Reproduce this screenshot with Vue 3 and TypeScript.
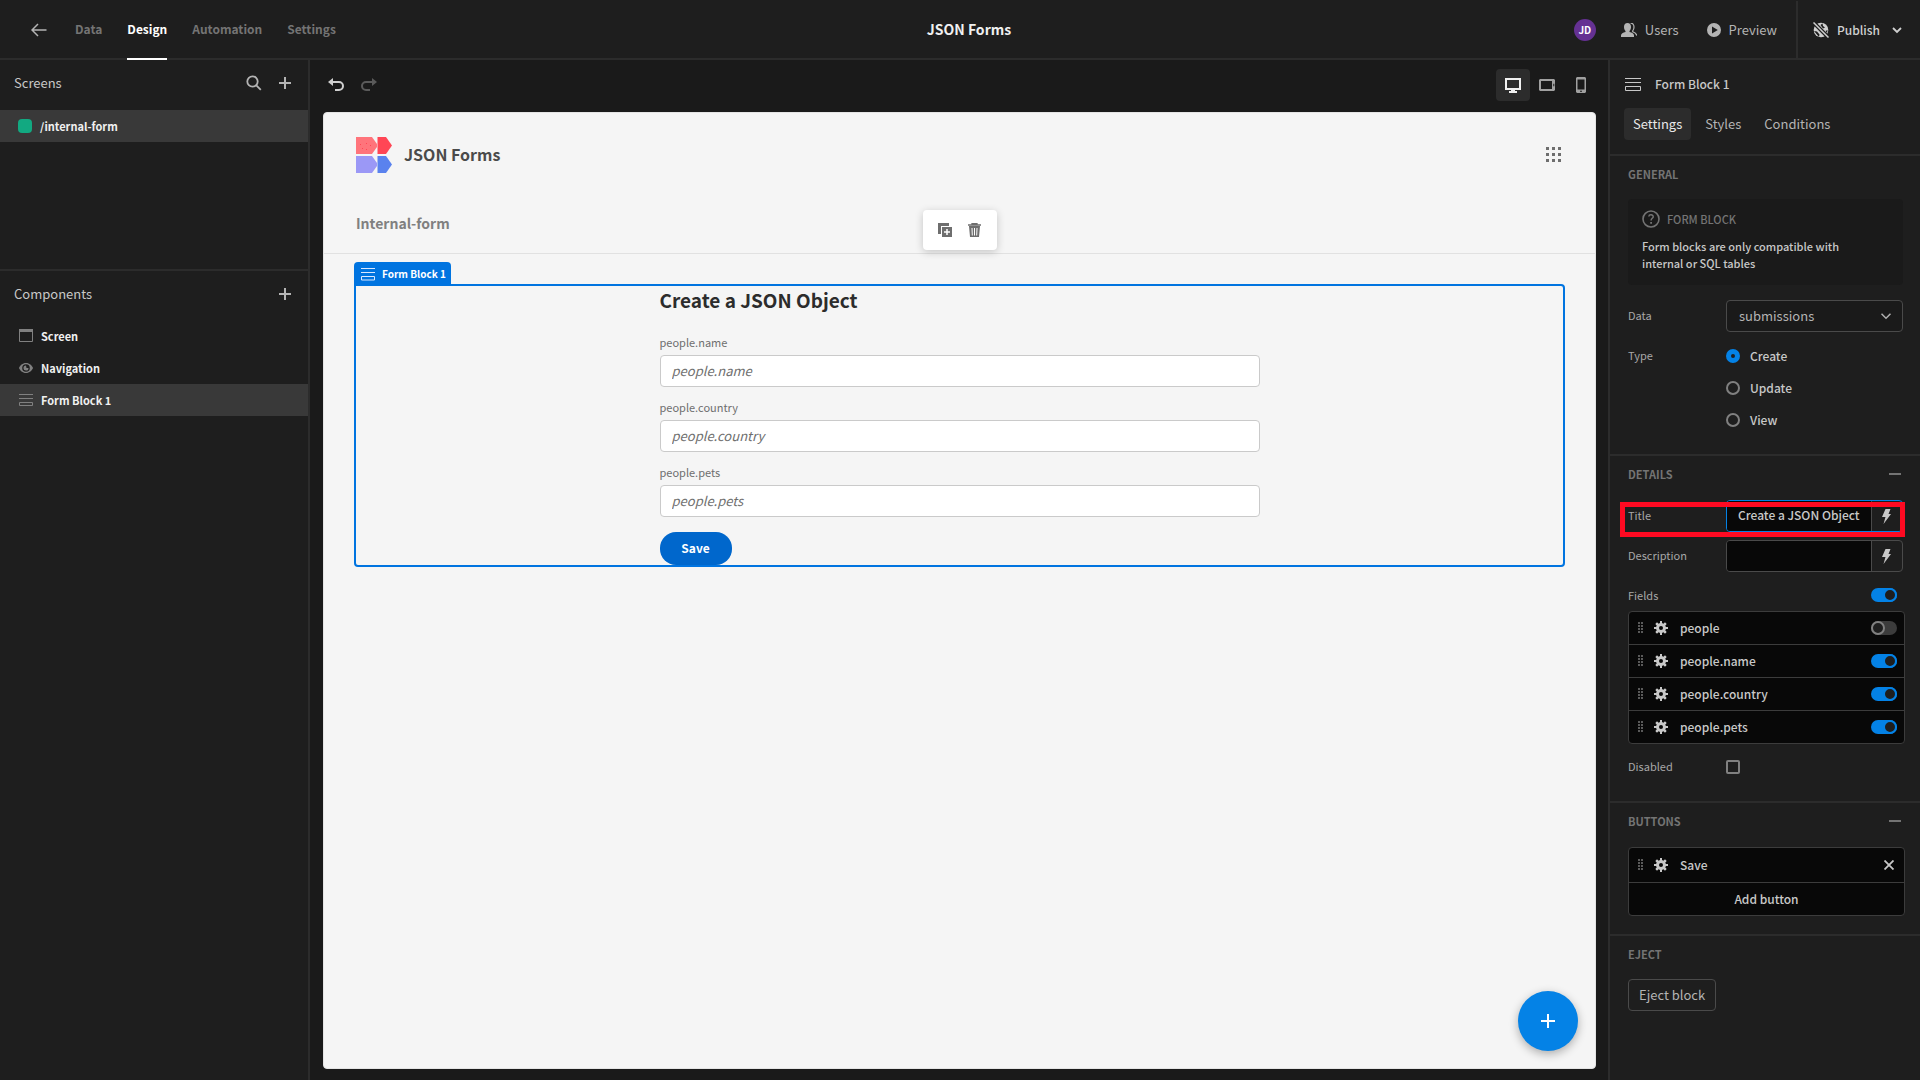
<script setup lang="ts">
import { ref } from 'vue'

interface FieldItem {
  name: string
  on: boolean
}

const navTabs = ['Data', 'Design', 'Automation', 'Settings']
const activeTab = ref('Design')

const panelTabs = ['Settings', 'Styles', 'Conditions']
const activePanelTab = ref('Settings')

const formTypes = ['Create', 'Update', 'View']
const formType = ref('Create')

const components = ['Screen', 'Navigation', 'Form Block 1']
const selectedComponent = ref('Form Block 1')

const devices = ['Desktop', 'Tablet', 'Mobile']
const device = ref('Desktop')

const title = ref('Create a JSON Object')
const description = ref('')
const allFields = ref(true)
const disabled = ref(false)
const fields = ref<FieldItem[]>([
  { name: 'people', on: false },
  { name: 'people.name', on: true },
  { name: 'people.country', on: true },
  { name: 'people.pets', on: true },
])
const formFields = ['people.name', 'people.country', 'people.pets']

const gearPath =
  'M6 0h2v2.1l1.4.6L11 1.3 12.7 3l-1.4 1.6.6 1.4H14v2h-2.1l-.6 1.4 1.4 1.6-1.7 1.7-1.6-1.4-1.4.6V14H6v-2.1l-1.4-.6L3 12.7 1.3 11l1.4-1.6L2.1 8H0V6h2.1l.6-1.4L1.3 3 3 1.300l1.6 1.4L6 2.1zM7 5a2 2 0 1 0 0 4 2 2 0 0 0 0-4z'
const boltPath = 'M4.500 0H9.500L7.500 5H10L2.500 15 4.500 8H1z'
</script>

<template>
  <div class="app">
    <header class="top">
      <nav class="top-nav">
        <button class="icon-btn back" aria-label="Back">
          <svg width="16" height="14" viewBox="0 0 16 14" fill="none" stroke="currentColor" stroke-width="1.500">
            <path d="M15.500 7H1M7 1 1 7l6 6" />
          </svg>
        </button>
        <a
          v-for="tab in navTabs"
          :key="tab"
          href="#"
          class="nav-link"
          :class="{ active: tab === activeTab }"
          @click.prevent="activeTab = tab"
          >{{ tab }}</a
        >
      </nav>
      <h1 class="app-name">JSON Forms</h1>
      <div class="top-actions">
        <span class="avatar">JD</span>
        <button class="top-btn users">
          <svg width="16" height="14" viewBox="0 0 16 14" fill="currentColor">
            <path d="M6.500 0C8.700 0 10 1.600 10 4c0 1.800-.6 3.100-1.500 4v.9c2.600.5 4.500 1.500 4.500 3.500V14H0v-1.600c0-2 2-3 4.500-3.500V8C3.600 7.100 3 5.800 3 4c0-2.400 1.300-4 3.500-4z" />
            <path d="M9.500.2C11.500 0 13 1.500 13 4c0 1.800-.5 3-1.300 3.800v1c2 .6 3.500 1.500 4.100 3.700" fill="none" stroke="currentColor" stroke-width="1.200" />
          </svg>
          Users
        </button>
        <button class="top-btn preview">
          <svg width="14" height="14" viewBox="0 0 14 14" fill="currentColor">
            <path fill-rule="evenodd" d="M7 0a7 7 0 1 1 0 14A7 7 0 0 1 7 0zM5 3.500v7L10.800 7z" />
          </svg>
          Preview
        </button>
        <button class="top-btn publish">
          <svg width="16" height="16" viewBox="0 0 16 16">
            <circle cx="8" cy="8" r="7.300" fill="currentColor" />
            <path d="M7.500 3l2-1.500.5 2.500 2 1.500-2 1zM1 9l3 .500 2.500 3L6 15zM12.500 9l2-1-.5 3z" fill="#1e1e1e" />
            <path d="M0 0 16 16" stroke="#1e1e1e" stroke-width="4" />
            <path d="M.5.500 15.500 15.500" stroke="currentColor" stroke-width="1.500" />
          </svg>
          Publish
          <svg class="chev" width="10" height="7" viewBox="0 0 10 7" fill="none" stroke="currentColor" stroke-width="1.800">
            <path d="M1 1l4 4 4-4" />
          </svg>
        </button>
      </div>
    </header>

    <div class="body">
      <aside class="left">
        <section class="screens">
          <div class="left-head">
            <h2>Screens</h2>
            <button class="icon-btn" aria-label="Search screens">
              <svg width="16" height="16" viewBox="0 0 16 16" fill="none" stroke="currentColor" stroke-width="1.800">
                <circle cx="6.500" cy="6.500" r="5.200" />
                <path d="M10.300 10.300l4.500 4.500" />
              </svg>
            </button>
            <button class="icon-btn" aria-label="Add screen">
              <svg width="12" height="12" viewBox="0 0 12 12" stroke="currentColor" stroke-width="2">
                <path d="M6 0v12M0 6h12" />
              </svg>
            </button>
          </div>
          <a href="#" class="tree-row screen-row selected" @click.prevent>
            <span class="dot"></span>/internal-form
          </a>
        </section>
        <section class="components">
          <div class="left-head">
            <h2>Components</h2>
            <button class="icon-btn" aria-label="Add component">
              <svg width="12" height="12" viewBox="0 0 12 12" stroke="currentColor" stroke-width="2">
                <path d="M6 0v12M0 6h12" />
              </svg>
            </button>
          </div>
          <a
            v-for="(c, i) in components"
            :key="c"
            href="#"
            class="tree-row"
            :class="{ selected: c === selectedComponent }"
            @click.prevent="selectedComponent = c"
          >
            <svg v-if="i === 0" width="14" height="14" viewBox="0 0 14 14">
              <path d="M.5.500h13v12H.5z" fill="none" stroke="#808080" />
              <path d="M0 0h14v3H0z" fill="#808080" />
            </svg>
            <svg v-else-if="i === 1" width="14" height="14" viewBox="0 0 14 14">
              <path fill="#808080" fill-rule="evenodd" d="M7 2c3.500 0 6 2.500 7 5-1 2.500-3.500 5-7 5s-6-2.500-7-5c1-2.500 3.500-5 7-5zm0 1.200a3.800 3.800 0 1 0 0 7.600 3.800 3.800 0 0 0 0-7.600z" />
              <path fill="#808080" d="M7 4.600A2.500 2.500 0 1 0 9.500 7L7.500 7z" />
            </svg>
            <svg v-else width="14" height="14" viewBox="0 0 14 14" fill="none" stroke="#808080">
              <path d="M0 1.500h14M0 5.500h14M.5 9.500h13v3H.5z" />
            </svg>
            {{ c }}
          </a>
        </section>
      </aside>

      <main class="center">
        <div class="toolbar">
          <button class="icon-btn undo" aria-label="Undo">
            <svg width="16" height="14" viewBox="0 0 16 14">
              <path d="M5 0v8L0 4z" fill="currentColor" />
              <path d="M3 4h8a4 4 0 0 1 0 8H7" fill="none" stroke="currentColor" stroke-width="2" />
            </svg>
          </button>
          <button class="icon-btn redo" aria-label="Redo" disabled>
            <svg width="16" height="14" viewBox="0 0 16 14">
              <path d="M11 0v8l5-4z" fill="currentColor" />
              <path d="M13 4H5a4 4 0 0 0 0 8h4" fill="none" stroke="currentColor" stroke-width="2" />
            </svg>
          </button>
          <div class="devices">
            <button
              v-for="d in devices"
              :key="d"
              class="device"
              :class="{ active: d === device }"
              :aria-label="d"
              @click="device = d"
            >
              <svg v-if="d === 'Desktop'" width="16" height="15" viewBox="0 0 16 15">
                <path d="M1 1h14v10H1z" fill="none" stroke="currentColor" stroke-width="2" />
                <path d="M6 11h4v2h2v2H4v-2h2z" fill="currentColor" />
              </svg>
              <svg v-else-if="d === 'Tablet'" width="16" height="12" viewBox="0 0 16 12">
                <path fill="currentColor" fill-rule="evenodd" d="M1 0h14l1 1v10l-1 1H1l-1-1V1zM2 2v8h11V2zM14.300 4.800v2.400h1V4.800z" />
              </svg>
              <svg v-else width="10" height="16" viewBox="0 0 10 16">
                <path fill="currentColor" fill-rule="evenodd" d="M1 0h8l1 1v14l-1 1H1l-1-1V1zM1.500 2.500v10h7v-10zM4 13.800v1h2v-1z" />
              </svg>
            </button>
          </div>
        </div>

        <div class="canvas">
          <div class="site-head">
            <div class="brand">
              <svg width="36" height="36" viewBox="0 0 36 36">
                <path d="M0 0h16l5 7v3l-5 7H0z" fill="#ff747b" />
                <path d="M21.500 0H30l6 8.500-6 8.500h-8.500z" fill="#ff4655" />
                <path d="M0 19h16l5 7v3l-5 7H0z" fill="#9b98f6" />
                <path d="M21.500 19H30l6 8.500-6 8.500h-8.500z" fill="#5a82ee" />
                <path d="M4 7h1v1H4zM6 11h1v1H6zM10 6h1v1h-1zM10 12h1v1h-1zM14 8h1v1h-1z" fill="#ff4655" />
              </svg>
              <span class="brand-name">JSON Forms</span>
              <button class="icon-btn apps" aria-label="Apps">
                <svg width="15" height="15" viewBox="0 0 15 15" fill="#6e6e6e">
                  <path d="M0 0h3v3H0zM6 0h3v3H6zM12 0h3v3h-3zM0 6h3v3H0zM6 6h3v3H6zM12 6h3v3h-3zM0 12h3v3H0zM6 12h3v3H6zM12 12h3v3h-3z" />
                </svg>
              </button>
            </div>
            <a href="#" class="site-link" @click.prevent>Internal-form</a>
            <div class="float-bar">
              <button class="icon-btn" aria-label="Duplicate">
                <svg width="15" height="15" viewBox="0 0 15 15">
                  <path d="M0 0h11v3H3v8H0z" fill="#6e6e6e" />
                  <path d="M4 4h10v10H4z" fill="#6e6e6e" />
                  <path d="M9 6v6M6 9h6" stroke="#fff" stroke-width="1.500" />
                </svg>
              </button>
              <button class="icon-btn" aria-label="Delete">
                <svg width="13" height="15" viewBox="0 0 13 15">
                  <path d="M4 2V.5h5V2M0 2h13" fill="none" stroke="#6e6e6e" stroke-width="1.300" />
                  <path d="M1 3h11l-1 11H2z" fill="#6e6e6e" />
                  <path d="M4 5l.3 7.500M6.500 5v7.500M9 5l-.3 7.500" stroke="#fff" stroke-width="1" />
                </svg>
              </button>
            </div>
          </div>

          <div class="block">
            <div class="block-tag">
              <svg width="14" height="13" viewBox="0 0 14 13" fill="none" stroke="#d9e8ff">
                <path d="M0 .5h14M0 4.500h14M.5 8.500h13v3.500H.5z" />
              </svg>
              Form Block 1
            </div>
            <form class="form" @submit.prevent>
              <h2>Create a JSON Object</h2>
              <div v-for="f in formFields" :key="f" class="form-field">
                <label :for="'form-' + f">{{ f }}</label>
                <input :id="'form-' + f" type="text" :placeholder="f" />
              </div>
              <button class="save" type="submit">Save</button>
            </form>
          </div>

          <button class="fab" aria-label="Add">
            <svg width="14" height="14" viewBox="0 0 14 14" stroke="#fff" stroke-width="2">
              <path d="M7 0v14M0 7h14" />
            </svg>
          </button>
        </div>
      </main>

      <aside class="right">
        <div class="panel-title">
          <svg width="16" height="13" viewBox="0 0 16 13" fill="none" stroke="#c8c8c8">
            <path d="M0 .5h16M0 4.500h16M.5 8.500h15v4H.5z" />
          </svg>
          Form Block 1
        </div>
        <div class="panel-tabs">
          <button
            v-for="t in panelTabs"
            :key="t"
            class="panel-tab"
            :class="{ active: t === activePanelTab }"
            @click="activePanelTab = t"
          >
            {{ t }}
          </button>
        </div>

        <section class="group">
          <h3>GENERAL</h3>
          <div class="info">
            <div class="info-head">
              <svg width="18" height="18" viewBox="0 0 18 18" fill="none" stroke="currentColor">
                <circle cx="9" cy="9" r="8" stroke-width="1.600" />
                <path d="M6.800 6.500C7 4.200 11.400 4.300 11.200 6.800 11 8.300 9.100 8.300 9.100 10.500" stroke-width="1.500" />
                <path d="M8.200 12h1.800v1.800H8.200z" fill="currentColor" stroke="none" />
              </svg>
              FORM BLOCK
            </div>
            <p>Form blocks are only compatible with internal or SQL tables</p>
          </div>
          <div class="row">
            <label for="data">Data</label>
            <div class="select-wrap">
              <select id="data">
                <option>submissions</option>
              </select>
              <svg class="select-chev" width="10" height="7" viewBox="0 0 10 7" fill="none" stroke="#b0b0b0" stroke-width="1.500">
                <path d="M.5.800 5 5.300 9.500.800" />
              </svg>
            </div>
          </div>
          <div class="row top-row">
            <span class="row-label">Type</span>
            <div class="radios">
              <label v-for="t in formTypes" :key="t" class="radio">
                <input v-model="formType" type="radio" name="form-type" :value="t" />{{ t }}
              </label>
            </div>
          </div>
        </section>

        <section class="group">
          <h3 class="collapsible">DETAILS<button class="icon-btn collapse" aria-label="Collapse details"></button></h3>
          <div class="row">
            <label for="title">Title</label>
            <div class="bind focused">
              <input id="title" v-model="title" type="text" />
              <button aria-label="Bind title">
                <svg width="11" height="15" viewBox="0 0 11 15" fill="currentColor"><path :d="boltPath" /></svg>
              </button>
            </div>
            <span class="marker"></span>
          </div>
          <div class="row">
            <label for="description">Description</label>
            <div class="bind">
              <input id="description" v-model="description" type="text" />
              <button aria-label="Bind description">
                <svg width="11" height="15" viewBox="0 0 11 15" fill="currentColor"><path :d="boltPath" /></svg>
              </button>
            </div>
          </div>
          <div class="row fields-row">
            <label for="all-fields">Fields</label>
            <input id="all-fields" v-model="allFields" type="checkbox" class="switch" />
          </div>
          <ul class="list">
            <li v-for="f in fields" :key="f.name">
              <svg width="5" height="12" viewBox="0 0 5 12" fill="#5a5a5a">
                <path d="M0 0h2v2H0zM3 0h2v2H3zM0 3h2v2H0zM3 3h2v2H3zM0 6h2v2H0zM3 6h2v2H3zM0 9h2v2H0zM3 9h2v2H3z" />
              </svg>
              <svg class="gear" width="14" height="14" viewBox="0 0 14 14" fill="currentColor" fill-rule="evenodd"><path :d="gearPath" /></svg>
              <label :for="'toggle-' + f.name">{{ f.name }}</label>
              <input :id="'toggle-' + f.name" v-model="f.on" type="checkbox" class="switch" />
            </li>
          </ul>
          <div class="row">
            <label for="disabled">Disabled</label>
            <input id="disabled" v-model="disabled" type="checkbox" class="check" />
          </div>
        </section>

        <section class="group">
          <h3 class="collapsible">BUTTONS<button class="icon-btn collapse" aria-label="Collapse buttons"></button></h3>
          <ul class="list buttons-list">
            <li class="tall">
              <svg width="5" height="12" viewBox="0 0 5 12" fill="#5a5a5a">
                <path d="M0 0h2v2H0zM3 0h2v2H3zM0 3h2v2H0zM3 3h2v2H3zM0 6h2v2H0zM3 6h2v2H3zM0 9h2v2H0zM3 9h2v2H3z" />
              </svg>
              <svg class="gear" width="14" height="14" viewBox="0 0 14 14" fill="currentColor" fill-rule="evenodd"><path :d="gearPath" /></svg>
              <span class="item-name">Save</span>
              <button class="icon-btn remove" aria-label="Remove Save">
                <svg width="10" height="10" viewBox="0 0 10 10" stroke="currentColor" stroke-width="1.800">
                  <path d="M.5.500l9 9M9.500.500l-9 9" />
                </svg>
              </button>
            </li>
            <li><button class="add">Add button</button></li>
          </ul>
        </section>

        <section class="group last">
          <h3>EJECT</h3>
          <button class="eject">Eject block</button>
        </section>
      </aside>
    </div>
  </div>
</template>

<style>
body {
  margin: 0;
  background: #1a1a1a;
}
</style>

<style scoped>
.app {
  min-height: 100vh;
  display: flex;
  flex-direction: column;
  background: #1a1a1a;
  color: #c8c8c8;
  font-family: 'Noto Sans CJK SC', 'Noto Sans', sans-serif;
  font-size: 13px;
  line-height: 18px;
}
*,
*::before {
  box-sizing: border-box;
}
button,
input,
select {
  font: inherit;
  color: inherit;
  margin: 0;
}
button {
  padding: 0;
  border: 0;
  background: none;
}
svg {
  display: block;
  flex: none;
}
a {
  color: inherit;
  text-decoration: none;
}
h1,
h2,
h3,
p,
ul {
  margin: 0;
  padding: 0;
  font-weight: inherit;
  font-size: inherit;
}
.icon-btn {
  display: flex;
  align-items: center;
  justify-content: center;
}

/* Header */
.top {
  height: 60px;
  display: grid;
  grid-template-columns: 1fr auto 1fr;
  padding-left: 18px;
  background: #1e1e1e;
  border-bottom: 2px solid #2c2c2c;
}
.top-nav {
  display: flex;
  align-items: center;
  gap: 25px;
  padding-left: 13px;
}
.back {
  margin-right: 3px;
  color: #b4b4b4;
}
.nav-link {
  height: 60px;
  line-height: 58px;
  font-size: 12px;
  font-weight: 600;
  color: #747474;
}
.nav-link.active {
  color: #fff;
  border-bottom: 2px solid #fff;
}
.app-name {
  font-size: 14px;
  font-weight: 600;
  line-height: 58px;
  color: #f0f0f0;
}
.top-actions {
  display: flex;
  justify-content: flex-end;
  align-items: center;
}
.avatar {
  width: 22px;
  height: 22px;
  border-radius: 50%;
  background: #653193;
  color: #fff;
  font-size: 10px;
  font-weight: 700;
  line-height: 22px;
  text-align: center;
}
.top-btn {
  display: flex;
  align-items: center;
  gap: 8px;
  color: #b4b4b4;
}
.users {
  margin-left: 25px;
}
.preview {
  margin: 0 19px 0 28px;
}
.publish {
  height: 58px;
  padding: 0 18px 0 15px;
  border-left: 2px solid #2c2c2c;
  font-size: 12px;
  font-weight: 500;
  color: #d0d0d0;
}
.chev {
  margin-left: 4px;
}

.body {
  flex: 1;
  display: flex;
}

/* Left sidebar */
.left {
  width: 310px;
  flex: none;
  background: #1e1e1e;
  border-right: 2px solid #2c2c2c;
}
.screens {
  height: 211px;
  border-bottom: 2px solid #2c2c2c;
}
.left-head {
  height: 46px;
  margin-bottom: 4px;
  padding: 0 17px 0 14px;
  display: flex;
  align-items: center;
  gap: 17px;
  color: #b4b4b4;
}
.components .left-head {
  margin-bottom: 3px;
}
.left-head h2 {
  flex: 1;
  color: #c8c8c8;
}
.tree-row {
  height: 32px;
  display: flex;
  align-items: center;
  gap: 8px;
  padding-left: 19px;
  font-size: 11px;
  font-weight: 600;
  color: #f0f0f0;
}
.screen-row {
  padding-left: 18px;
}
.selected {
  background: #393939;
}
.dot {
  width: 14px;
  height: 14px;
  border-radius: 4px;
  background: #12a981;
}

/* Canvas */
.center {
  flex: 1;
  min-width: 0;
  display: flex;
  flex-direction: column;
  padding: 0 12px 11px 13px;
}
.toolbar {
  height: 52px;
  display: flex;
  align-items: center;
  gap: 17px;
  padding-left: 5px;
  padding-bottom: 2px;
}
.undo {
  color: #d0d0d0;
}
.redo {
  color: #5a5a5a;
}
.devices {
  display: flex;
  margin-left: auto;
  margin-right: -2px;
}
.device {
  width: 34px;
  height: 32px;
  display: flex;
  align-items: center;
  justify-content: center;
  border-radius: 4px;
  color: #a0a0a0;
}
.device.active {
  background: #2c2c2c;
  color: #f0f0f0;
}
.canvas {
  position: relative;
  flex: 1;
  background: #f5f5f5;
  border: 1px solid #e4e4e4;
  border-radius: 4px;
}
.site-head {
  position: relative;
  padding: 24px 32px 0;
  height: 141px;
  border-bottom: 1px solid #e1e1e1;
}
.brand {
  display: flex;
  align-items: center;
  gap: 12px;
}
.brand-name {
  padding-bottom: 2px;
  font-size: 16px;
  font-weight: 600;
  color: #4a4a4a;
}
.apps {
  margin-left: auto;
  margin-right: 2px;
  padding-bottom: 1px;
}
.site-link {
  display: block;
  width: max-content;
  margin-top: 38px;
  font-size: 14px;
  font-weight: 600;
  line-height: 24px;
  color: #808080;
}
.float-bar {
  position: absolute;
  left: 50%;
  bottom: 3px;
  transform: translateX(-50%);
  width: 74px;
  height: 40px;
  display: flex;
  align-items: center;
  justify-content: center;
  gap: 15px;
  background: #fff;
  border-radius: 4px;
  box-shadow: 0 2px 8px rgba(0, 0, 0, 0.2);
}
.block {
  position: relative;
  margin: 30px 30px 0;
  border: 2px solid #0074e0;
  border-radius: 0 4px 4px 4px;
}
.block-tag {
  position: absolute;
  left: -2px;
  bottom: 100%;
  height: 24px;
  padding: 0 5px 0 7px;
  display: flex;
  align-items: center;
  gap: 7px;
  background: #0074e0;
  border-radius: 4px 4px 0 0;
  color: #fff;
  font-size: 10px;
  font-weight: 600;
  white-space: nowrap;
}
.form {
  max-width: 600px;
  margin: 0 auto;
}
.form h2 {
  font-size: 19px;
  font-weight: 600;
  line-height: 28px;
  margin-bottom: 20px;
  color: #2c2c2c;
}
.form-field {
  margin-bottom: 12px;
}
.form-field label {
  display: block;
  font-size: 11px;
  line-height: 16px;
  margin-bottom: 5px;
  color: #6e6e6e;
}
.form-field label + input {
  display: block;
  width: 100%;
  height: 32px;
  padding: 0 11px 2px;
  background: #fff;
  border: 1px solid #cacaca;
  border-radius: 4px;
}
.form-field input::placeholder {
  font-style: italic;
  color: #6e6e6e;
  opacity: 1;
}
.save {
  display: block;
  width: 72px;
  height: 33px;
  margin-top: 15px;
  padding-bottom: 2px;
  border-radius: 16px;
  background: #0067cc;
  color: #fff;
  font-size: 12px;
  font-weight: 600;
}
.fab {
  position: absolute;
  right: 17px;
  bottom: 17px;
  width: 60px;
  height: 60px;
  display: flex;
  align-items: center;
  justify-content: center;
  border-radius: 50%;
  background: #0482e6;
  box-shadow: 0 3px 10px rgba(0, 0, 0, 0.3);
}

/* Right panel */
.right {
  width: 312px;
  flex: none;
  background: #1e1e1e;
  border-left: 2px solid #2c2c2c;
}
.panel-title {
  height: 48px;
  padding-left: 15px;
  display: flex;
  align-items: center;
  gap: 14px;
  font-size: 12px;
  font-weight: 500;
  color: #c8c8c8;
}
.panel-tabs {
  display: flex;
  gap: 5px;
  padding: 0 14px 14px;
  border-bottom: 2px solid #2c2c2c;
}
.panel-tab {
  height: 32px;
  padding: 0 9px;
  border-radius: 4px;
  color: #b4b4b4;
}
.panel-tab.active {
  background: #2c2c2c;
  color: #e8e8e8;
}
.group {
  padding: 0 15px 18px 18px;
  border-bottom: 2px solid #2c2c2c;
}
.group.last {
  border-bottom: 0;
}
.group h3 {
  height: 36px;
  margin-bottom: 7px;
  display: flex;
  align-items: center;
  justify-content: space-between;
  font-size: 11px;
  font-weight: 600;
  color: #747474;
}
.group .collapsible {
  margin-bottom: 8px;
}
.collapse {
  width: 20px;
  height: 20px;
}
.collapse::before {
  content: '';
  width: 12px;
  height: 2px;
  background: #747474;
}
.info {
  margin: 0 2px 15px 0;
  height: 86px;
  padding: 11px 40px 11px 14px;
  border-radius: 4px;
  background: #1a1a1a;
}
.info-head {
  height: 18px;
  display: flex;
  align-items: center;
  gap: 7px;
  font-size: 11px;
  font-weight: 500;
  color: #747474;
}
.info p {
  margin-top: 10px;
  font-size: 11px;
  font-weight: 500;
  line-height: 17px;
}
.row {
  position: relative;
  min-height: 32px;
  margin: 0 2px 8px 0;
  display: grid;
  grid-template-columns: 98px 1fr;
  align-items: center;
}
.row:last-child {
  margin-bottom: 0;
}
.row > label,
.row-label {
  padding-bottom: 2px;
  font-size: 11px;
  line-height: 30px;
  color: #a8a8a8;
}
.top-row {
  align-items: start;
}
.select-wrap {
  position: relative;
}
.select-wrap select {
  display: block;
  width: 100%;
  height: 32px;
  padding: 0 12px;
  appearance: none;
  background: #1a1a1a;
  border: 1px solid #4a4a4a;
  border-radius: 4px;
  color: #b4b4b4;
}
.select-chev {
  position: absolute;
  right: 12px;
  top: 13px;
  pointer-events: none;
}
.radio {
  height: 32px;
  display: flex;
  align-items: center;
  gap: 10px;
  font-size: 12px;
  font-weight: 500;
}
.radio input {
  width: 14px;
  height: 14px;
  appearance: none;
  border: 2px solid #808080;
  border-radius: 50%;
}
.radio input:checked {
  border: 5px solid #0482e6;
}
.bind {
  height: 32px;
  display: flex;
  border: 1px solid #4a4a4a;
  border-radius: 4px;
  overflow: hidden;
}
.bind.focused {
  border-color: #0482e6;
}
.bind input {
  flex: 1;
  min-width: 0;
  padding: 0 4px 2px 11px;
  border: 0;
  background: #080808;
  font-size: 12px;
  font-weight: 500;
}
.bind button {
  width: 31px;
  padding-right: 2px;
  display: flex;
  align-items: center;
  justify-content: center;
  border-left: 1px solid #4a4a4a;
}
.marker {
  position: absolute;
  inset: 2px -2px -5px -8px;
  border: 5px solid #ff0a22;
  pointer-events: none;
}
.fields-row {
  min-height: 31px;
  margin: 0;
  grid-template-columns: 1fr auto;
}
.fields-row > label {
  padding-bottom: 1px;
}
.fields-row .switch {
  margin: 0 8px 2px 0;
}
.switch {
  position: relative;
  width: 26px;
  height: 14px;
  flex: none;
  appearance: none;
  border-radius: 7px;
  background: #3c3c3c;
}
.switch::before {
  content: '';
  position: absolute;
  left: 0;
  top: 0;
  width: 14px;
  height: 14px;
  border: 2px solid #808080;
  border-radius: 50%;
  background: #1e1e1e;
}
.switch:checked {
  background: #0482e6;
}
.switch:checked::before {
  left: 12px;
  border-color: #0482e6;
}
.list {
  list-style: none;
  margin-bottom: 7px;
  border: 1px solid #3c3c3c;
  border-radius: 4px;
  background: #080808;
  overflow: hidden;
}
.buttons-list {
  margin-bottom: 0;
}
.list li {
  height: 32px;
  display: flex;
  align-items: center;
  padding: 0 7px 0 9px;
  font-size: 12px;
  font-weight: 500;
}
.list li + li {
  height: 33px;
  border-top: 1px solid #3c3c3c;
}
.list .tall {
  height: 34px;
}
.gear {
  margin: 0 12px 0 11px;
}
.list label,
.item-name {
  flex: 1;
}
.remove {
  margin-right: 3px;
}
.add {
  flex: 1;
  height: 32px;
  padding-right: 2px;
  font-weight: 500;
}
.check {
  width: 14px;
  height: 14px;
  appearance: none;
  border: 2px solid #808080;
  border-radius: 2px;
}
.eject {
  height: 32px;
  padding: 0 10px;
  border: 1px solid #4a4a4a;
  border-radius: 4px;
  color: #b4b4b4;
}
</style>
